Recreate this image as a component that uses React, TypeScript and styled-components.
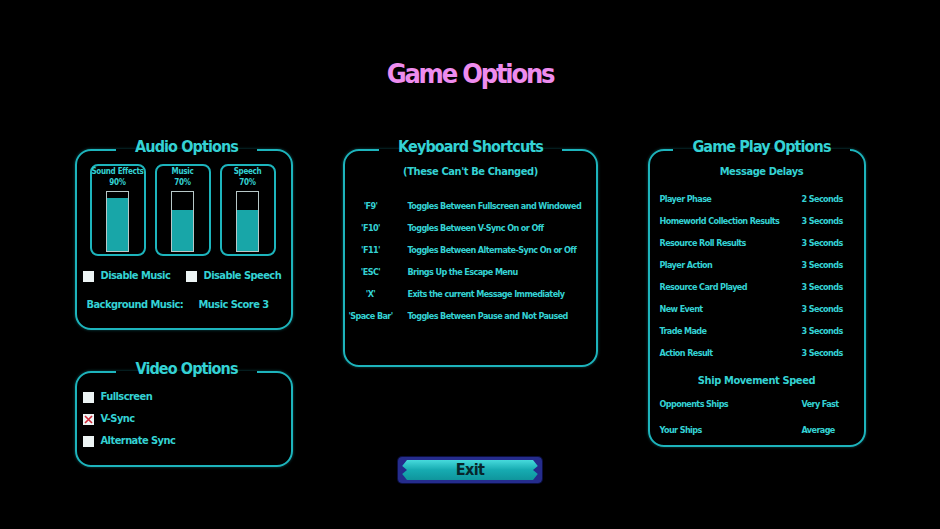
import { FunctionComponent } from "react";
import styled, { createGlobalStyle } from "styled-components";

const CYAN = "#34d2d4";
const BORDER = "#1db4bc";
const NAVY = "#252c8c";
const FONT = `"DejaVu Sans Condensed", "DejaVu Sans", sans-serif`;

const GlobalStyle = createGlobalStyle`
  html, body {
    margin: 0;
    padding: 0;
    background: #000;
  }
  body {
    width: 940px;
    height: 529px;
    overflow: hidden;
    font-family: ${FONT};
    font-stretch: condensed;
    font-weight: bold;
  }
`;

interface SliderData {
  label: string;
  value: number;
}

const sliders: SliderData[] = [
  { label: "Sound Effects", value: 90 },
  { label: "Music", value: 70 },
  { label: "Speech", value: 70 },
];

const shortcuts: [string, string][] = [
  ["'F9'", "Toggles Between Fullscreen and Windowed"],
  ["'F10'", "Toggles Between V-Sync On or Off"],
  ["'F11'", "Toggles Between Alternate-Sync On or Off"],
  ["'ESC'", "Brings Up the Escape Menu"],
  ["'X'", "Exits the current Message Immediately"],
  ["'Space Bar'", "Toggles Between Pause and Not Paused"],
];

const delays: [string, string][] = [
  ["Player Phase", "2 Seconds"],
  ["Homeworld Collection Results", "3 Seconds"],
  ["Resource Roll Results", "3 Seconds"],
  ["Player Action", "3 Seconds"],
  ["Resource Card Played", "3 Seconds"],
  ["New Event", "3 Seconds"],
  ["Trade Made", "3 Seconds"],
  ["Action Result", "3 Seconds"],
];

const Checkbox: FunctionComponent<{ checked?: boolean }> = ({ checked }) => (
  <Box>
    {checked ? (
      <svg width="11" height="11" viewBox="0 0 11 11">
        <path d="M2 2 L9 9 M9 2 L2 9" stroke="#d02838" strokeWidth="1.6" />
      </svg>
    ) : null}
  </Box>
);

const App: FunctionComponent = () => {
  return (
    <Page>
      <GlobalStyle />
      <Title>Game Options</Title>
      <Columns>
        <Column>
          <Panel>
            <Legend>Audio Options</Legend>
            <SliderRow>
              {sliders.map((s) => (
                <SliderBox key={s.label}>
                  <SliderLabel>
                    {s.label}
                    <br />
                    {s.value}%
                  </SliderLabel>
                  <Bar>
                    <BarFill style={{ height: `${s.value}%` }} />
                  </Bar>
                </SliderBox>
              ))}
            </SliderRow>
            <CheckRow>
              <CheckItem>
                <Checkbox />
                <Label>Disable Music</Label>
              </CheckItem>
              <CheckItem>
                <Checkbox />
                <Label>Disable Speech</Label>
              </CheckItem>
            </CheckRow>
            <MusicRow>
              <Label>Background Music:</Label>
              <Label>Music Score 3</Label>
            </MusicRow>
          </Panel>
          <VideoPanel>
            <Legend>Video Options</Legend>
            <CheckList>
              <CheckItem>
                <Checkbox />
                <Label>Fullscreen</Label>
              </CheckItem>
              <CheckItem>
                <Checkbox checked />
                <Label>V-Sync</Label>
              </CheckItem>
              <CheckItem>
                <Checkbox />
                <Label>Alternate Sync</Label>
              </CheckItem>
            </CheckList>
          </VideoPanel>
        </Column>

        <Column>
          <KeyPanel>
            <Legend>Keyboard Shortcuts</Legend>
            <SubTitle>(These Can't Be Changed)</SubTitle>
            <KeyGrid>
              {shortcuts.map(([key, desc]) => (
                <KeyRow key={key}>
                  <KeyName>{key}</KeyName>
                  <Small>{desc}</Small>
                </KeyRow>
              ))}
            </KeyGrid>
          </KeyPanel>
          <ExitButton>Exit</ExitButton>
        </Column>

        <Column>
          <PlayPanel>
            <Legend>Game Play Options</Legend>
            <SubTitle>Message Delays</SubTitle>
            <DelayList>
              {delays.map(([name, value]) => (
                <ValueRow key={name}>
                  <Small>{name}</Small>
                  <Small>{value}</Small>
                </ValueRow>
              ))}
            </DelayList>
            <SpeedTitle>Ship Movement Speed</SpeedTitle>
            <SpeedList>
              <ValueRow>
                <Small>Opponents Ships</Small>
                <Small>Very Fast</Small>
              </ValueRow>
              <ValueRow>
                <Small>Your Ships</Small>
                <Small>Average</Small>
              </ValueRow>
            </SpeedList>
          </PlayPanel>
        </Column>
      </Columns>
    </Page>
  );
};

const Page = styled.div`
  display: flex;
  flex-direction: column;
  align-items: center;
  padding-top: 58px;
`;

const Title = styled.h1`
  margin: 0;
  font-size: 27px;
  line-height: 32px;
  letter-spacing: -2.2px;
  color: #ee8cee;
  font-weight: bold;
`;

const Columns = styled.div`
  display: grid;
  grid-template-columns: 218px 255px 218px;
  column-gap: 50px;
  margin-top: 48px;
  align-items: start;
`;

const Column = styled.div`
  display: flex;
  flex-direction: column;
  align-items: stretch;
`;

const Panel = styled.fieldset`
  margin: 0;
  min-width: 0;
  border: 2px solid ${BORDER};
  border-radius: 16px;
  padding: 3px 0 16px 6px;
  box-shadow: 0 0 3px rgba(29, 180, 188, 0.45);
`;

const VideoPanel = styled(Panel)`
  margin-top: 30px;
  padding: 7px 0 17px 6px;
`;

const KeyPanel = styled(Panel)`
  padding: 4px 0 42px 1px;
`;

const PlayPanel = styled(Panel)`
  padding: 4px 0 8px 10px;
`;

const Legend = styled.legend`
  margin: 0 auto;
  padding: 0 19px 5px;
  font-size: 16px;
  line-height: 18px;
  letter-spacing: -0.9px;
  color: ${CYAN};
`;

const SliderRow = styled.div`
  display: flex;
  gap: 9px;
  margin-left: 7px;
`;

const SliderBox = styled.div`
  width: 56px;
  height: 92px;
  box-sizing: border-box;
  border: 2px solid ${BORDER};
  border-radius: 8px;
  display: flex;
  flex-direction: column;
  align-items: center;
`;

const SliderLabel = styled.div`
  font-size: 8px;
  line-height: 11px;
  letter-spacing: -0.3px;
  color: ${CYAN};
  text-align: center;
  white-space: nowrap;
`;

const Bar = styled.div`
  margin-top: 3px;
  width: 23px;
  height: 61px;
  box-sizing: border-box;
  border: 1px solid #b8c8c8;
  background: #000;
  display: flex;
  flex-direction: column;
  justify-content: flex-end;
`;

const BarFill = styled.div`
  background: #18a6a8;
`;

const CheckRow = styled.div`
  display: grid;
  grid-template-columns: 103px auto;
  margin-top: 13px;
`;

const CheckItem = styled.div`
  display: flex;
  align-items: center;
  gap: 7px;
  height: 14px;
`;

const Box = styled.div`
  width: 11px;
  height: 11px;
  background: #edf4f4;
  display: flex;
`;

const Label = styled.span`
  font-size: 11px;
  line-height: 14px;
  letter-spacing: -0.55px;
  color: ${CYAN};
  white-space: nowrap;
`;

const MusicRow = styled.div`
  display: grid;
  grid-template-columns: 112px auto;
  margin: 15px 0 0 4px;
`;

const CheckList = styled.div`
  display: flex;
  flex-direction: column;
  gap: 8px;
`;

const SubTitle = styled.div`
  font-size: 11px;
  line-height: 14px;
  letter-spacing: -0.4px;
  color: ${CYAN};
  text-align: center;
`;

const KeyGrid = styled.div`
  display: flex;
  flex-direction: column;
  gap: 8px;
  margin-top: 20px;
`;

const KeyRow = styled.div`
  display: grid;
  grid-template-columns: 50px 1fr;
  column-gap: 12px;
`;

const Small = styled.span`
  font-size: 9px;
  line-height: 14px;
  letter-spacing: -0.6px;
  color: ${CYAN};
  white-space: nowrap;
`;

const KeyName = styled(Small)`
  text-align: center;
`;

const DelayList = styled.div`
  display: flex;
  flex-direction: column;
  gap: 8px;
  margin-top: 13px;
`;

const ValueRow = styled.div`
  display: grid;
  grid-template-columns: 142px auto;
`;

const SpeedTitle = styled(SubTitle)`
  margin-top: 14px;
  padding-right: 10px;
`;

const SpeedList = styled.div`
  display: flex;
  flex-direction: column;
  gap: 12px;
  margin-top: 9px;
`;

const ExitButton = styled.button`
  position: relative;
  align-self: center;
  margin-top: 90px;
  width: 144px;
  height: 26px;
  box-sizing: border-box;
  border: 3px solid ${NAVY};
  border-radius: 4px;
  background: linear-gradient(#46dadc, #16abb1 50%, #0f959c);
  box-shadow: 0 0 0 1px #0b0f40;
  font-family: ${FONT};
  font-stretch: condensed;
  font-weight: bold;
  font-size: 16px;
  line-height: 18px;
  letter-spacing: -0.6px;
  color: #08262b;
  padding: 0;
  cursor: pointer;

  &::before,
  &::after {
    content: "";
    position: absolute;
    top: 0;
    bottom: 0;
    width: 6px;
    background: ${NAVY};
  }

  &::before {
    left: 0;
    clip-path: polygon(0 0, 100% 0, 20% 30%, 100% 50%, 20% 70%, 100% 100%, 0 100%);
  }

  &::after {
    right: 0;
    clip-path: polygon(100% 0, 0 0, 80% 30%, 0 50%, 80% 70%, 0 100%, 100% 100%);
  }
`;

export default App;
